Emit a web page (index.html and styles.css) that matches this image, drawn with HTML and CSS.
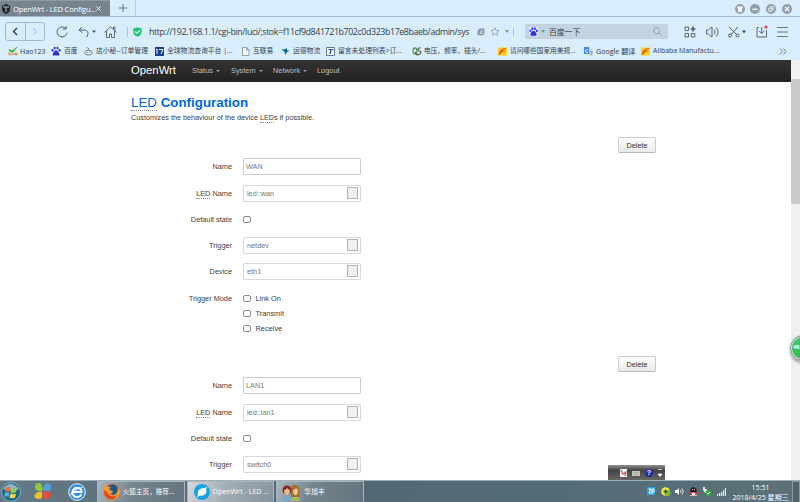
FILE: index.html
```html
<!DOCTYPE html>
<html lang="en">
<head>
<meta charset="utf-8">
<title>OpenWrt - LED Configuration</title>
<link rel="stylesheet" href="styles.css">
</head>
<body>
<header class="browser">
  <div class="tabs">
    <div class="tab">
      <svg class="tab-icon" width="10" height="10" viewBox="0 0 10 10"><path d="M1 2 5 0l4 2v3c0 3-2 4-4 5C3 9 1 8 1 5z" fill="#20262b"/><path d="M2 3h6M5 3v5" stroke="#b5bec5"/></svg>
      <span class="tab-title">OpenWrt - LED Configu...</span>
      <svg width="5" height="5" viewBox="0 0 5 5"><path d="m.5.5 4 4m0-4-4 4" stroke="#fff" stroke-width=".9"/></svg>
    </div>
    <div class="new-tab"><svg width="8" height="8" viewBox="0 0 8 8"><path d="M4 0v8M0 4h8" stroke="#65737f"/></svg></div>
    <div class="window-buttons">
      <svg width="10" height="10" viewBox="0 0 10 10"><circle cx="5" cy="5" r="5" fill="#93a0aa"/><path d="m2 3 2-1 1 1 1-1 2 1-1 2v3H3V5z" fill="#f4f8fb"/></svg>
      <svg width="10" height="10" viewBox="0 0 10 10"><circle cx="5" cy="5" r="5" fill="#93a0aa"/><path d="M2.5 5.3h5" stroke="#fff" stroke-width="1.3"/></svg>
      <svg width="10" height="10" viewBox="0 0 10 10"><circle cx="5" cy="5" r="5" fill="#93a0aa"/><path d="M2.8 4.2h3v3h-3zM4.3 4V2.7h3v3H6" fill="none" stroke="#fff" stroke-width=".8"/></svg>
      <svg width="10" height="10" viewBox="0 0 10 10"><circle cx="5" cy="5" r="5" fill="#93a0aa"/><path d="m3 3 4 4m0-4L3 7" stroke="#fff" stroke-width="1.1"/></svg>
    </div>
  </div>
  <div class="toolbar">
    <div class="history">
      <span class="back"><svg width="6" height="9" viewBox="0 0 6 9"><path d="M5 1 1.5 4.5 5 8" fill="none" stroke="#26323b" stroke-width="1.3"/></svg></span>
      <span class="forward"><svg width="6" height="9" viewBox="0 0 6 9"><path d="m1 1 3.5 3.5L1 8" fill="none" stroke="#a5b4c0"/></svg></span>
    </div>
    <svg class="reload" width="12" height="12" viewBox="0 0 12 12"><path d="M9.5 2.3A5 5 0 1 0 11 6.8M6.7 3h3.5V0" fill="none" stroke="#4f5e6a"/></svg>
    <svg class="undo" width="19" height="12" viewBox="0 0 19 12"><path d="M4 1 1 4l3.5 2.7M1 4h5c4.500 0 5 4.500 2.500 7" fill="none" stroke="#4f5e6a"/><path d="m14 4.500h4l-2 2.500z" fill="#45515b"/></svg>
    <svg class="home" width="13" height="12" viewBox="0 0 13 12"><path d="M.5 6.500 6.500.7l6 5.800M2.500 5v6.500h3V8h2v3.500h3V5M9.500 3V1h1.500v3.500" fill="none" stroke="#4f5e6a" stroke-width=".9"/></svg>
    <i class="divider"></i>
    <svg class="shield" width="9" height="10" viewBox="0 0 9 10"><path d="m.3 1.500 4.200-1.200 4.200 1.200v3c0 3-2 4.300-4.200 5.200C2.300 8.800.3 7.500.3 4.500z" fill="#1dc774"/><path d="m2.300 4.500 1.700 1.700 2.900-2.700" fill="none" stroke="#fff" stroke-width="1.200"/></svg>
    <span class="url">http://192.168.1.1/cgi-bin/luci/;stok=f11cf9d841721b702c0d323b17e8baeb/admin/sys</span>
    <svg class="engine" width="8" height="8" viewBox="0 0 8 8"><circle cx="4" cy="4" r="2.800" fill="none" stroke="#84929d" stroke-width="1.500"/><path d="M1 4h6M.7 7C2 3 5 0 7.500 1" stroke="#84929d" fill="none"/></svg>
    <svg class="star" width="10" height="9" viewBox="0 0 10 9"><path d="m5 .7 1.200 2.600 2.900.3L7 5.500l.6 2.800L5 6.900 2.400 8.300 3 5.500.9 3.600l2.900-.3z" fill="none" stroke="#8c99a4" stroke-width=".8"/></svg>
    <svg class="caret" width="4" height="3" viewBox="0 0 4 3"><path d="M0 0h4L2 3z" fill="#82909b"/></svg>
    <i class="divider short"></i>
    <div class="search">
      <span class="search-engine"><svg width="9" height="9" viewBox="0 0 10 10"><path d="M0 0h10v10H0z" fill="#e8eefb"/><g fill="#2935df"><ellipse cx="1.500" cy="4.300" rx="1.100" ry="1.500"/><ellipse cx="3.700" cy="2" rx="1.100" ry="1.600"/><ellipse cx="6.500" cy="2" rx="1.100" ry="1.600"/><ellipse cx="8.600" cy="4.300" rx="1.100" ry="1.500"/><path d="M5 4.300c1.500 0 2 1.500 3 2.700 1.500 2-.2 3-1.500 2.600H3.700C2 10 .5 9 2 7c1-1.200 1.500-2.700 3-2.700"/></g></svg></span>
      <svg width="4" height="3" viewBox="0 0 4 3"><path d="M0 0h4L2 3z" fill="#81909b"/></svg>
      <span class="search-text">百度一下</span>
      <svg width="9" height="9" viewBox="0 0 9 9"><circle cx="3.700" cy="3.700" r="3" fill="none" stroke="#97a5b0"/><path d="m6 6 2.700 2.700" stroke="#97a5b0"/></svg>
    </div>
    <div class="tools">
      <svg width="12" height="12" viewBox="0 0 12 12"><path d="M1 1h3.500v3.500H1zM1 7.500h3.500V11H1zM7.300 7.500h3.500V11H7.300z" fill="none" stroke="#4e5b65" stroke-width=".9"/><path d="M9 .5v5M6.500 3h5" stroke="#26333d" stroke-width="1.200"/></svg>
      <svg width="13" height="12" viewBox="0 0 13 12"><path d="M.5 4h2l3.500-3v10L2.500 8h-2zM8 3.500q2 2.500 0 5M10 1.500q4 4.500 0 9" fill="none" stroke="#4e5b65" stroke-width=".9"/></svg>
      <svg width="18" height="12" viewBox="0 0 18 12"><path d="m1 1 8 8M10 1 3 8.500" stroke="#4e5b65"/><circle cx="2" cy="9.500" r="1.500" fill="none" stroke="#4e5b65"/><circle cx="9.500" cy="9.500" r="1.500" fill="none" stroke="#4e5b65"/><path d="M14 4.500h4l-2 3z" fill="#3e4a53"/></svg>
      <svg width="12" height="13" viewBox="0 0 12 13"><path d="M3 2.500H1V12h9.500V5M5.700 2v6.500M3.200 6l2.500 2.500L8.200 6" fill="none" stroke="#4e5b65" stroke-width=".9"/><circle cx="10" cy="2" r="1.600" fill="#e93e42"/></svg>
      <svg width="11" height="10" viewBox="0 0 11 10"><path d="M0 .5h11M0 5h11M0 9.500h11" stroke="#5b6872" stroke-width=".9"/></svg>
    </div>
  </div>
  <nav class="bookmarks">
    <span class="mark m-hao"><svg width="10" height="9" viewBox="0 0 10 9"><path d="m.5 3 2-.5L4 4l5-4-4.500 6z" fill="#48af35" stroke="#48af35" stroke-width=".6"/><path d="M1 5v3.500M1 7h2v1.500M4 8q0-2 2 0V6M7.500 6h1.500v2H7.500z" fill="none" stroke="#ed7a35" stroke-width=".9"/></svg>Hao123</span>
    <span class="mark m-baidu"><svg width="10" height="10" viewBox="0 0 10 10"><path d="M0 0h10v10H0z" fill="#fff"/><g fill="#2935df"><ellipse cx="1.500" cy="4.300" rx="1.100" ry="1.500"/><ellipse cx="3.700" cy="2" rx="1.100" ry="1.600"/><ellipse cx="6.500" cy="2" rx="1.100" ry="1.600"/><ellipse cx="8.600" cy="4.300" rx="1.100" ry="1.500"/><path d="M5 4.300c1.500 0 2 1.500 3 2.700 1.500 2-.2 3-1.500 2.600H3.700C2 10 .5 9 2 7c1-1.200 1.500-2.700 3-2.700"/></g></svg>百度</span>
    <span class="mark m-shop"><svg width="9" height="9" viewBox="0 0 9 9"><ellipse cx="4.500" cy="5.700" rx="3.800" ry="2.400" fill="none" stroke="#65747e" stroke-width=".9"/><path d="M4.500 3V1l-2-.3M3 5.500h.8m1.500 0H6" fill="none" stroke="#65747e" stroke-width=".8"/></svg>店小秘--订单管理</span>
    <span class="mark m-track"><svg width="9" height="9" viewBox="0 0 9 9"><path d="M0 0h9v9H0z" fill="#123d91"/><path d="m1 2.500 1-.5v5M4 2.500h4L6 7" fill="none" stroke="#fff"/></svg>全球物流查询平台 |...</span>
    <span class="mark m-net"><svg width="8" height="9" viewBox="0 0 8 9"><path d="M.5.500h4.200L7 3v5.500H.5zM4.500.5V3H7" fill="#f8fbfd" stroke="#7e8c96" stroke-width=".8"/></svg>互联易</span>
    <span class="mark m-yun"><svg width="9" height="9" viewBox="0 0 9 9"><path d="m.5 2 3 .5L6 1v2l2.500 1-2.500 1-1.500 3-1-3z" fill="#0968a2"/></svg>运德物流</span>
    <span class="mark m-msg"><svg width="9" height="9" viewBox="0 0 9 9"><path d="M.5.500h8v8h-8z" fill="#fff" stroke="#5b7ba4"/><path d="M2.500 2.500h5M5 2.500 4 7" stroke="#244c80" stroke-width="1.200"/></svg>留言未处理列表&gt;订...</span>
    <span class="mark m-volt"><svg width="10" height="9" viewBox="0 0 10 9"><ellipse cx="3" cy="4" rx="2" ry="3" fill="none" stroke="#5e9148" stroke-width="1.300"/><path d="m3 5 2.500 3.500M8.500 1C5 .5 5.500 4 7.500 4s2 4-2 3.500" fill="none" stroke="#495a41" stroke-width="1.200"/></svg>电压，频率，插头/...</span>
    <span class="mark m-ask"><svg width="9" height="9" viewBox="0 0 10 9"><path d="M0 0h10v9H0z" fill="#ffcf23"/><path d="M1 8Q2 1 9 1 5 2 4 4h4Q4 4 3 7z" fill="#dd5b19" stroke="#dd5b19" stroke-width=".6"/></svg>请问哪些国家用美规...</span>
    <span class="mark m-google"><svg width="9" height="9" viewBox="0 0 9 9"><path d="M0 0h5l1.500 7H0z" fill="#4286e8"/><path d="m5 2 4 .5V9H5.500z" fill="#cbd5de"/><path d="M4 3a1.500 1.500 0 1 0 0 2H3" fill="none" stroke="#fff" stroke-width=".8"/><path d="M6 5h2.500L6.500 8" fill="none" stroke="#7790a2" stroke-width=".7"/></svg>Google 翻译</span>
    <span class="mark m-ali"><svg width="9" height="9" viewBox="0 0 10 9"><path d="M0 0h10v9H0z" fill="#ffcf23"/><path d="M1 8Q2 1 9 1 5 2 4 4h4Q4 4 3 7z" fill="#dd5b19" stroke="#dd5b19" stroke-width=".6"/></svg>Alibaba Manufactu...</span>
    <svg class="more" width="8" height="7" viewBox="0 0 8 7"><path d="m1 .500 2.500 3L1 6.500M4.500.500l2.500 3-2.500 3" fill="none" stroke="#59656d" stroke-width=".8"/></svg>
  </nav>
</header>

<div class="viewport">
  <div class="page">
    <nav class="navbar">
      <span class="brand">OpenWrt</span>
      <span class="nav-item status">Status <i></i></span>
      <span class="nav-item system">System <i></i></span>
      <span class="nav-item network">Network <i></i></span>
      <span class="nav-item">Logout</span>
    </nav>
    <main class="content">
      <h1><abbr>LED</abbr> Configuration</h1>
      <p class="intro">Customizes the behaviour of the device <abbr>LED</abbr>s if possible.</p>
      <section class="led">
        <div class="actions"><button>Delete</button></div>
        <div class="row"><label>Name</label><span class="field text">WAN</span></div>
        <div class="row"><label><abbr>LED</abbr> Name</label><span class="field select">led::wan<i></i></span></div>
        <div class="row check-row"><label>Default state</label><i class="box"></i></div>
        <div class="row trigger-row"><label>Trigger</label><span class="field select">netdev<i></i></span></div>
        <div class="row"><label>Device</label><span class="field select">eth1<i></i></span></div>
        <div class="row mode-row"><label>Trigger Mode</label>
          <div class="modes"><span><i class="box"></i>Link On</span><span><i class="box"></i>Transmit</span><span><i class="box"></i>Receive</span></div>
        </div>
      </section>
      <section class="led">
        <div class="actions"><button>Delete</button></div>
        <div class="row"><label>Name</label><span class="field text">LAN1</span></div>
        <div class="row"><label><abbr>LED</abbr> Name</label><span class="field select">led::lan1<i></i></span></div>
        <div class="row check-row"><label>Default state</label><i class="box"></i></div>
        <div class="row trigger-row"><label>Trigger</label><span class="field select">switch0<i></i></span></div>
      </section>
    </main>
  </div>
  <div class="scrollbar"><div class="thumb"></div></div>
  <div class="badge">46</div>
  <div class="language-bar">
    <svg width="7" height="8" viewBox="0 0 7 8"><path d="M0 0h7v8H0z" fill="#eef4f8"/><path d="m1 1 2 4 3-2-1 4" fill="none" stroke="#ce5242" stroke-width="1.200"/></svg>
    <svg width="8" height="6" viewBox="0 0 8 6"><path d="M0 1h8v5H0z" fill="#c9c9c4"/><path d="M1 2.500h6M1 4.500h6" stroke="#777" stroke-width=".6" stroke-dasharray="1 .5"/></svg>
    <span class="help">?</span>
    <svg width="4" height="9" viewBox="0 0 4 9"><path d="M0 1.500h4M0 6h4L2 8.500z" fill="#fff" stroke="#fff" stroke-width=".7"/></svg>
  </div>
</div>

<footer class="taskbar">
  <div class="start"><svg width="20" height="20" viewBox="0 0 20 20"><circle cx="10" cy="10" r="9.500" fill="#226786" stroke="#89adbd"/><path d="M2 7Q9-3 18 7 9 10 2 7" fill="#91b5c4"/><path d="M5 6q2-2 4.500 0l-1 4Q6 8.500 4 10z" fill="#f26b34"/><path d="M10.500 6.500Q13 8 16 6l-1 4q-3 2-5.500.5z" fill="#9acb42"/><path d="M4 11q2-1.500 4.500 0l-1 4Q5 13.500 3 15z" fill="#55b2ec"/><path d="M9.500 11.500q2.500 1.500 5.500 0l-1 4q-3 1.500-5.500 0z" fill="#fbd449"/></svg></div>
  <div class="launcher"><svg width="18" height="17" viewBox="0 0 18 17"><path d="M8.500 8Q1 9 1 4t5-4q3 2 2.500 8" fill="#91c73b"/><path d="M9 7q0-7 5-6.500t3 6q-3 3-8 .5" fill="#549fd9"/><path d="M9.500 8.500q7-1 7.500 4-3 5-6 3.500t-1.500-7.500" fill="#e94b3d"/><path d="M8 9q1 8-4 7T1 11q3-3 7-2" fill="#f3bd26"/></svg></div>
  <div class="explorer"><svg width="18" height="18" viewBox="0 0 18 18"><circle cx="9" cy="9" r="8.300" fill="#2e8fe0" stroke="#e6f2fa" stroke-width="1"/><path d="M13.300 11.300A4.700 4.700 0 1 1 13.700 9H4.500" fill="none" stroke="#fff" stroke-width="1.900"/><path d="M2.500 12.500Q4 6.500 14.500 4.500" fill="none" stroke="#fff" stroke-width="1"/></svg></div>
  <div class="task firefox"><svg width="18" height="18" viewBox="0 0 18 18"><circle cx="9" cy="9" r="8.300" fill="#ee7021"/><circle cx="9.500" cy="7" r="5.800" fill="#20588e"/><path d="M1 5 3 2l2 2 3-.5-2 3 4 2-1 2H7q3 3 6 0 3-3 1-7 5 5 2 9-4 6-10 4Q0 13 1 5" fill="#f99a21"/><path d="M1 7q3 1 4 4 4 5 9 1-3 6-8 4-5-2-5-9" fill="#e24526"/></svg><span>火狐主页，推荐...</span></div>
  <div class="task active"><svg width="18" height="18" viewBox="0 0 18 18"><circle cx="9" cy="9" r="8" fill="#16a2e5"/><path d="M14.500 3.500 13 6.500q1.500 4-2.500 5.800-2 .8-3.500.2l-3.500 2 1.600-3.300Q4 7.500 7.500 5.700 10 4.700 11.300 5.300z" fill="#fff"/></svg><span>OpenWrt - LED ...</span></div>
  <div class="task chat"><svg width="18" height="17" viewBox="0 0 18 17"><path d="M0 17q0-5 4.500-5T9 17" fill="#77a8ca"/><path d="M9 17q0-5 4-5t5 5" fill="#a2bd65"/><path d="M9 13V5q0-4 4-4t4.500 5v7z" fill="#a76d2c"/><circle cx="5" cy="6" r="4.500" fill="#7e2c22"/><path d="M2 6q2 0 3-2 2 2 3 2 0 5-3 5T2 6" fill="#f1b98f"/><path d="M11 6q2 0 3-2l2 2q0 5-2.500 5T11 6" fill="#f5c7a0"/></svg><span>华旭丰</span></div>
  <div class="tray">
    <svg width="9" height="9" viewBox="0 0 9 9"><path d="M0 0h8v8H0z" fill="#26a2ed"/><path d="M1.500 2h2.500L2 6h2M5 2h2v3H5zm0 3v2" fill="none" stroke="#fff"/></svg>
    <svg width="10" height="10" viewBox="0 0 10 10"><circle cx="4.500" cy="4.500" r="4.300" fill="#f5e83c"/><circle cx="6.500" cy="6" r="3" fill="#85ba31"/><path d="M4.500 2.500v4m-2-2h4" stroke="#245b36" stroke-width="1.500"/></svg>
    <svg width="9" height="9" viewBox="0 0 9 9"><path d="M0 3h2l2-2v7L2 6H0z" fill="#fff"/><path d="M5.500 3q1 1.500 0 3M7 1.500q2.500 3 0 6" fill="none" stroke="#fff" stroke-width=".8"/></svg>
    <svg width="9" height="9" viewBox="0 0 9 9"><ellipse cx="4.500" cy="4.500" rx="3.300" ry="4.200" fill="#211520"/><path d="M.5 4.500q4 1.500 8 0L8 7H1z" fill="#dc2852"/><ellipse cx="4.500" cy="7" rx="2" ry="1.600" fill="#fff"/><path d="M3 2.500h1m1 0h1M1 8.500h7" stroke="#f5b6b1"/></svg>
    <svg width="10" height="9" viewBox="0 0 10 9"><path d="M1 0h2v2h2v4H3L1 3z" fill="#dce7e8"/><circle cx="6.500" cy="6" r="3" fill="#36a844"/><path d="m5 6 1 1 2-2" fill="none" stroke="#fff"/></svg>
    <svg width="9" height="8" viewBox="0 0 9 8"><path d="M.5 8V6m2 2V5m2 3V4m2 4V2m2 6V0" stroke="#e9f0f2" stroke-width="1.200"/></svg>
  </div>
  <div class="clock"><span>15:51</span><span>2018/4/25 星期三</span></div>
  <div class="show-desktop"></div>
</footer>
</body>
</html>
```
FILE: styles.css
```css
* { box-sizing: border-box; }
body { margin: 0; width: 800px; height: 502px; overflow: hidden; display: flex; flex-direction: column; background: #fff; font-family: "Liberation Sans", sans-serif; font-size: 7px; color: #404040; }
svg { display: block; flex: none; }
.browser { height: 60px; flex: none; background: #d9edfc; font-family: "Open Sans", "Noto Sans CJK SC", sans-serif; color: #34414b; }
.tabs { display: flex; height: 17px; border-bottom: 1px solid #a8b9c8; }
.tab { width: 110px; display: flex; align-items: center; background: #77838f; color: #fff; font-size: 7.600px; border-top: 1px solid #8c9aa5; }
.tab-icon { margin-left: 1px; }
.tab-title { width: 85px; padding-left: 2px; white-space: nowrap; letter-spacing: -.2px; }
.new-tab { width: 26px; display: grid; place-items: center; border-right: 1px solid #b6c7d5; }
.window-buttons { display: flex; gap: 5.8px; margin-left: auto; padding: 4px 8px 0 0; }
.toolbar { height: 27px; display: flex; align-items: center; padding: 2px 0 0 5px; }
.history { width: 40px; height: 19px; display: flex; border: 1px solid #a5b8c7; border-radius: 3px; }
.history span { flex: 1; display: grid; place-items: center; }
.history .back { border-right: 1px solid #a5b8c7; }
.reload { margin-left: 11px; }
.undo { margin-left: 10px; }
.home { margin-left: 7px; }
.divider { height: 10px; width: 1px; flex: none; margin-left: 10px; background: #b0c1ce; }
.shield { margin-left: 5px; }
.url { width: 321px; flex: none; margin-left: 7px; font-size: 8.900px; letter-spacing: -.42px; line-height: 14px; white-space: nowrap; color: #353f46; }
.engine { margin-left: 7px; }
.star { margin-left: 5px; }
.caret { margin-left: 5px; }
.divider.short { height: 8px; margin-left: 4px; }
.search { width: 143px; height: 15px; margin-left: 11px; display: flex; align-items: center; border-radius: 2px; background: #c3d3df; font-size: 7.800px; flex: none; }
.search-engine { width: 16px; height: 15px; display: grid; place-items: center; }
.search-text { flex: 1; margin-left: 4px; line-height: 14px; }
.search > svg:last-child { margin-right: 6px; }
.tools { display: flex; align-items: center; gap: 9.500px; margin-left: 16px; }
.bookmarks { height: 16px; display: flex; align-items: center; padding: 0 0 2px 8px; font-size: 6.800px; color: #34414a; }
.mark { display: flex; align-items: center; gap: 3px; flex: none; white-space: nowrap; line-height: 12px; }
.m-hao { width: 43px; font-size: 7.100px; gap: 2px; }
.m-baidu { width: 33px; }
.m-shop { width: 71px; }
.m-track { width: 87px; }
.m-net { width: 39px; }
.m-yun { width: 45px; }
.m-msg { width: 86px; }
.m-volt { width: 86px; font-size: 6.700px; gap: 2px; }
.m-ask { width: 86px; font-size: 6.700px; }
.m-google { width: 57px; font-size: 7.100px; }
.m-ali { width: 138px; font-size: 6.950px; }
.viewport { flex: 1; min-height: 0; display: flex; position: relative; overflow: hidden; }
.page { width: 791px; overflow: hidden; }
.navbar { height: 22px; display: flex; align-items: center; padding-left: 131px; background: linear-gradient(#333, #222); color: #bfbfbf; font-size: 7.400px; }
.brand { width: 61px; color: #fff; font-size: 11.300px; margin-top: -2px; }
.nav-item { display: flex; align-items: center; gap: 3px; margin-top: -1px; }
.nav-item i { border: 2px solid transparent; border-top-color: #a0a0a0; border-bottom: 0; }
.status { width: 39px; }
.system { width: 42px; }
.network { width: 44px; }
.content { padding: 12px 0 0 131px; }
h1 { height: 17px; margin: 0; font-size: 13.350px; line-height: 17px; color: #0069d6; }
h1 abbr { font-weight: normal; }
abbr { border-bottom: 1px dotted #77899a; }
.intro { height: 14px; margin: 0 0 12px; font-size: 7.260px; line-height: 13px; }
.led { height: 219.300px; }
.actions { width: 525px; height: 16px; display: flex; justify-content: flex-end; }
button { width: 38px; height: 16px; padding: 0; border: 1px solid #ccc; border-bottom-color: #b9b9b9; border-radius: 2px; background: linear-gradient(#fff, #e9e9e9); color: #333; font: 7.300px "Liberation Sans", sans-serif; }
.row { height: 26.700px; display: flex; align-items: center; }
label { width: 101px; margin-right: 11px; text-align: right; font-size: 7.330px; line-height: 9px; }
.field { width: 118px; height: 17px; display: flex; align-items: center; padding: 0 2px; border: 1px solid #ccc; border-radius: 1px; color: #777; font-size: 7.300px; }
.select { justify-content: space-between; padding-left: 3px; border-color: #d8d8d8; }
.select i { width: 11px; height: 12px; border: 1px solid #b2b2b2; background: #f0f0f0; }
.box { width: 8px; height: 7px; border: 1px solid #8c8c8c; border-radius: 2px; background: #fff; flex: none; }
.check-row { height: 26px; }
.trigger-row { height: 25.500px; }
.mode-row { height: 60px; align-items: flex-start; padding-top: 9px; }
.modes { display: flex; flex-direction: column; gap: 6px; font-size: 7.400px; line-height: 9px; }
.modes span { display: flex; align-items: center; gap: 4.500px; }
.scrollbar { width: 9px; background: #f0f0f0; }
.thumb { height: 125px; margin-top: 19px; background: #c9c9c9; }
.badge { position: absolute; left: 790px; top: 275px; width: 26px; height: 26px; padding: 8px 0 0 2px; border: 1px solid #9b9b9b; border-radius: 50%; background: linear-gradient(#45c979, #2dbc48); box-shadow: 0 0 0 1px #ddd inset, 0 2px 3px #999; color: #fff; font: bold 6px "Liberation Sans", sans-serif; }
.language-bar { position: absolute; left: 608px; top: 405px; width: 57px; height: 15px; padding: 0 3px 0 12px; display: flex; align-items: center; justify-content: space-between; background: linear-gradient(#929292, #444 35%, #666); }
.help { width: 8px; height: 8px; border-radius: 50%; background: #252ba6; color: #fff; font-weight: bold; line-height: 8px; text-align: center; }
.taskbar { height: 22px; flex: none; display: flex; align-items: center; background: linear-gradient(90deg, #637985, #526874 40%, #536d78 70%, #5c7179); border-top: 1px solid #9daeb9; overflow: hidden; color: #fff; font-family: "Open Sans", "Noto Sans CJK SC", sans-serif; font-size: 7.100px; }
.start { width: 34px; padding-left: 1px; }
.launcher { width: 34px; }
.explorer { width: 29px; }
.task { width: 88px; height: 21px; display: flex; align-items: center; padding-left: 5px; margin-right: 2px; border: 1px solid #a9b5bc; border-bottom: 0; border-radius: 1px; background: linear-gradient(110deg, #aab4ba, #73848f 40%, #63747e); white-space: nowrap; }
.task span { margin: -2px 0 0 2px; }
.firefox { font-size: 6.600px; }
.active { background: linear-gradient(110deg, #d4d9dc, #a1acb3 45%, #84949e); }
.chat { font-size: 6.800px; }
.chat span { margin-left: 4px; }
.tray { width: 78px; display: flex; align-items: center; gap: 4.500px; margin-left: 281px; }
.clock { width: 63px; margin-left: 4px; display: flex; flex-direction: column; align-items: center; line-height: 10px; font-size: 7.050px; }
.show-desktop { width: 8px; height: 22px; margin-left: auto; border: 1px solid #8a999f; background: #516469; }
```
